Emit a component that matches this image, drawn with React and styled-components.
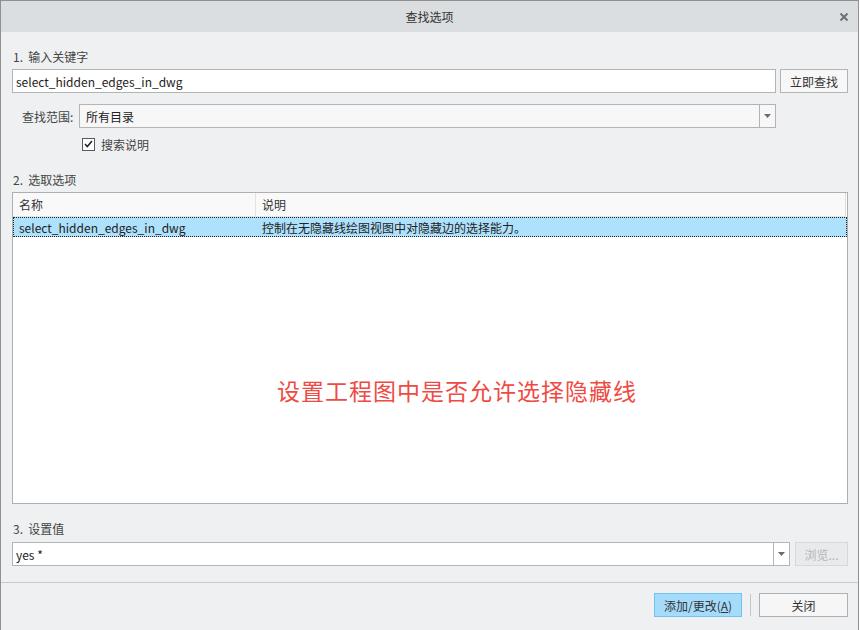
import React from "react";
import styled, { createGlobalStyle } from "styled-components";

const Global = createGlobalStyle`
  html, body {
    margin: 0;
    padding: 0;
    background: #ffffff;
  }
  body {
    font-family: "Noto Sans CJK SC", "Noto Sans", sans-serif;
    font-size: 12px;
    color: #333;
  }
`;

const Window = styled.div`
  width: 857px;
  height: 629px;
  border: 1px solid #8e9092;
  border-bottom: none;
  background: #eef0f2;
  display: flex;
  flex-direction: column;
`;

const TitleBar = styled.div`
  height: 31px;
  background: #dbdee0;
  position: relative;
  display: flex;
  align-items: center;
  justify-content: center;
  color: #333;
  font-size: 12px;
`;

const CloseBtn = styled.div`
  position: absolute;
  right: 9px;
  top: 11px;
  width: 10px;
  height: 10px;
  display: flex;
`;

const Body = styled.div`
  padding: 17px 10px 0 11px;
  display: flex;
  flex-direction: column;
`;

const SectionLabel = styled.div`
  height: 16px;
  line-height: 16px;
  color: #444;
  padding-left: 1px;
  margin-top: ${(p) => p.$top ?? 0}px;
`;

const Row = styled.div`
  display: flex;
  align-items: center;
  gap: ${(p) => p.$gap ?? 4}px;
  margin-top: ${(p) => p.$top ?? 0}px;
  padding-left: ${(p) => p.$indent ?? 0}px;
  padding-right: ${(p) => p.$right ?? 0}px;
`;

const TextInput = styled.div`
  flex: 1;
  height: 22px;
  border: 1px solid #b3b4b5;
  background: ${(p) => p.$bg || "#ffffff"};
  display: flex;
  align-items: center;
  color: #222;
  font-size: 12px;
  padding-left: ${(p) => p.$pad ?? 3}px;
`;

const InputText = styled.span`
  flex: 1;
`;

const ArrowBox = styled.div`
  width: 15px;
  height: 22px;
  border-left: 1px solid #b3b4b5;
  display: flex;
  align-items: center;
  justify-content: center;
`;

const Button = styled.div`
  width: ${(p) => p.$w}px;
  height: 22px;
  box-sizing: content-box;
  border: 1px solid ${(p) => p.$border || "#b3b4b5"};
  background: ${(p) => p.$bg || "#f7f7f7"};
  color: ${(p) => p.$color || "#333"};
  display: flex;
  align-items: center;
  justify-content: center;
  font-size: 12px;
`;

const FieldLabel = styled.div`
  width: 57px;
  flex-shrink: 0;
  color: #444;
`;

const CheckRow = styled.div`
  display: flex;
  align-items: center;
  gap: 6px;
  height: 24px;
  margin-top: 4px;
  padding-left: 70px;
  color: #444;
`;

const CheckBox = styled.div`
  width: 11px;
  height: 11px;
  border: 1px solid #5a5a5a;
  background: #ffffff;
  display: flex;
  align-items: center;
  justify-content: center;
`;

const Table = styled.div`
  margin-top: 4px;
  height: 310px;
  border: 1px solid #adafb0;
  background: #ffffff;
  display: flex;
  flex-direction: column;
`;

const HeaderRow = styled.div`
  height: 23px;
  background: #f9f9f9;
  border-bottom: 1px solid #e6e6e6;
  border-right: 1px solid #dcdcdc;
  margin-right: 1px;
  display: grid;
  grid-template-columns: 243px 1fr;
`;

const HeaderCell = styled.div`
  display: flex;
  align-items: center;
  padding-left: 6px;
  color: #333;
  border-right: ${(p) => (p.$divider ? "1px solid #e3e3e3" : "none")};
`;

const DataRow = styled.div`
  height: 18px;
  background: #aee1fc;
  border: 1px dotted #222;
  display: grid;
  grid-template-columns: 243px 1fr;
  color: #222;
`;

const DataCell = styled.div`
  display: flex;
  align-items: center;
  padding-left: ${(p) => p.$pad}px;
`;

const Hint = styled.div`
  flex: 1;
  display: flex;
  align-items: center;
  justify-content: center;
  padding-left: 54px;
  padding-top: 40px;
  color: #ee4b45;
  font-size: 23px;
  letter-spacing: 1px;
`;

const Divider = styled.div`
  height: 1px;
  background: #c8cacc;
  margin-top: 16px;
`;

const Footer = styled.div`
  display: flex;
  justify-content: flex-end;
  align-items: center;
  padding: 10px 10px 0 0;
  gap: 8px;
`;

const VSep = styled.div`
  width: 1px;
  height: 22px;
  background: #c3c5c7;
`;

const Arrow = () => (
  <svg width="7" height="4" viewBox="0 0 7 4">
    <path d="M0 0H7L3.5 4Z" fill="#6b6b6b" />
  </svg>
);

export default function App() {
  return (
    <>
      <Global />
      <Window>
        <TitleBar>
          查找选项
          <CloseBtn>
            <svg width="10" height="10" viewBox="0 0 10 10">
              <path d="M1.5 1.5L8.5 8.5M8.5 1.5L1.5 8.5" stroke="#707070" strokeWidth="2" />
            </svg>
          </CloseBtn>
        </TitleBar>
        <Body>
          <SectionLabel>1.&nbsp; 输入关键字</SectionLabel>
          <Row $top={4}>
            <TextInput>
              <InputText>select_hidden_edges_in_dwg</InputText>
            </TextInput>
            <Button $w={66}>立即查找</Button>
          </Row>
          <Row $top={11} $indent={10} $right={72} $gap={0}>
            <FieldLabel>查找范围:</FieldLabel>
            <TextInput $bg="#f7f7f7" $pad={6}>
              <InputText>所有目录</InputText>
              <ArrowBox>
                <Arrow />
              </ArrowBox>
            </TextInput>
          </Row>
          <CheckRow>
            <CheckBox>
              <svg width="9" height="8" viewBox="0 0 9 8">
                <path d="M1 4L3.3 6.5L8 1" stroke="#222" strokeWidth="1.5" fill="none" />
              </svg>
            </CheckBox>
            搜索说明
          </CheckRow>
          <SectionLabel $top={16}>2.&nbsp; 选取选项</SectionLabel>
          <Table>
            <HeaderRow>
              <HeaderCell $divider>名称</HeaderCell>
              <HeaderCell>说明</HeaderCell>
            </HeaderRow>
            <DataRow>
              <DataCell $pad={5}>select_hidden_edges_in_dwg</DataCell>
              <DataCell $pad={5}>控制在无隐藏线绘图视图中对隐藏边的选择能力。</DataCell>
            </DataRow>
            <Hint>设置工程图中是否允许选择隐藏线</Hint>
          </Table>
          <SectionLabel $top={17}>3.&nbsp; 设置值</SectionLabel>
          <Row $top={5} $gap={5}>
            <TextInput>
              <InputText>yes *</InputText>
              <ArrowBox>
                <Arrow />
              </ArrowBox>
            </TextInput>
            <Button $w={51} $bg="#e8eaeb" $border="#d6d8d9" $color="#b5b7b8">
              浏览...
            </Button>
          </Row>
        </Body>
        <Divider />
        <Footer>
          <Button $w={86} $bg="#a6dcfb" $border="#72c3f0">
            添加/更改(<u>A</u>)
          </Button>
          <VSep />
          <Button $w={87} $bg="#f6f6f6" $border="#aeb0b1">
            关闭
          </Button>
        </Footer>
      </Window>
    </>
  );
}
